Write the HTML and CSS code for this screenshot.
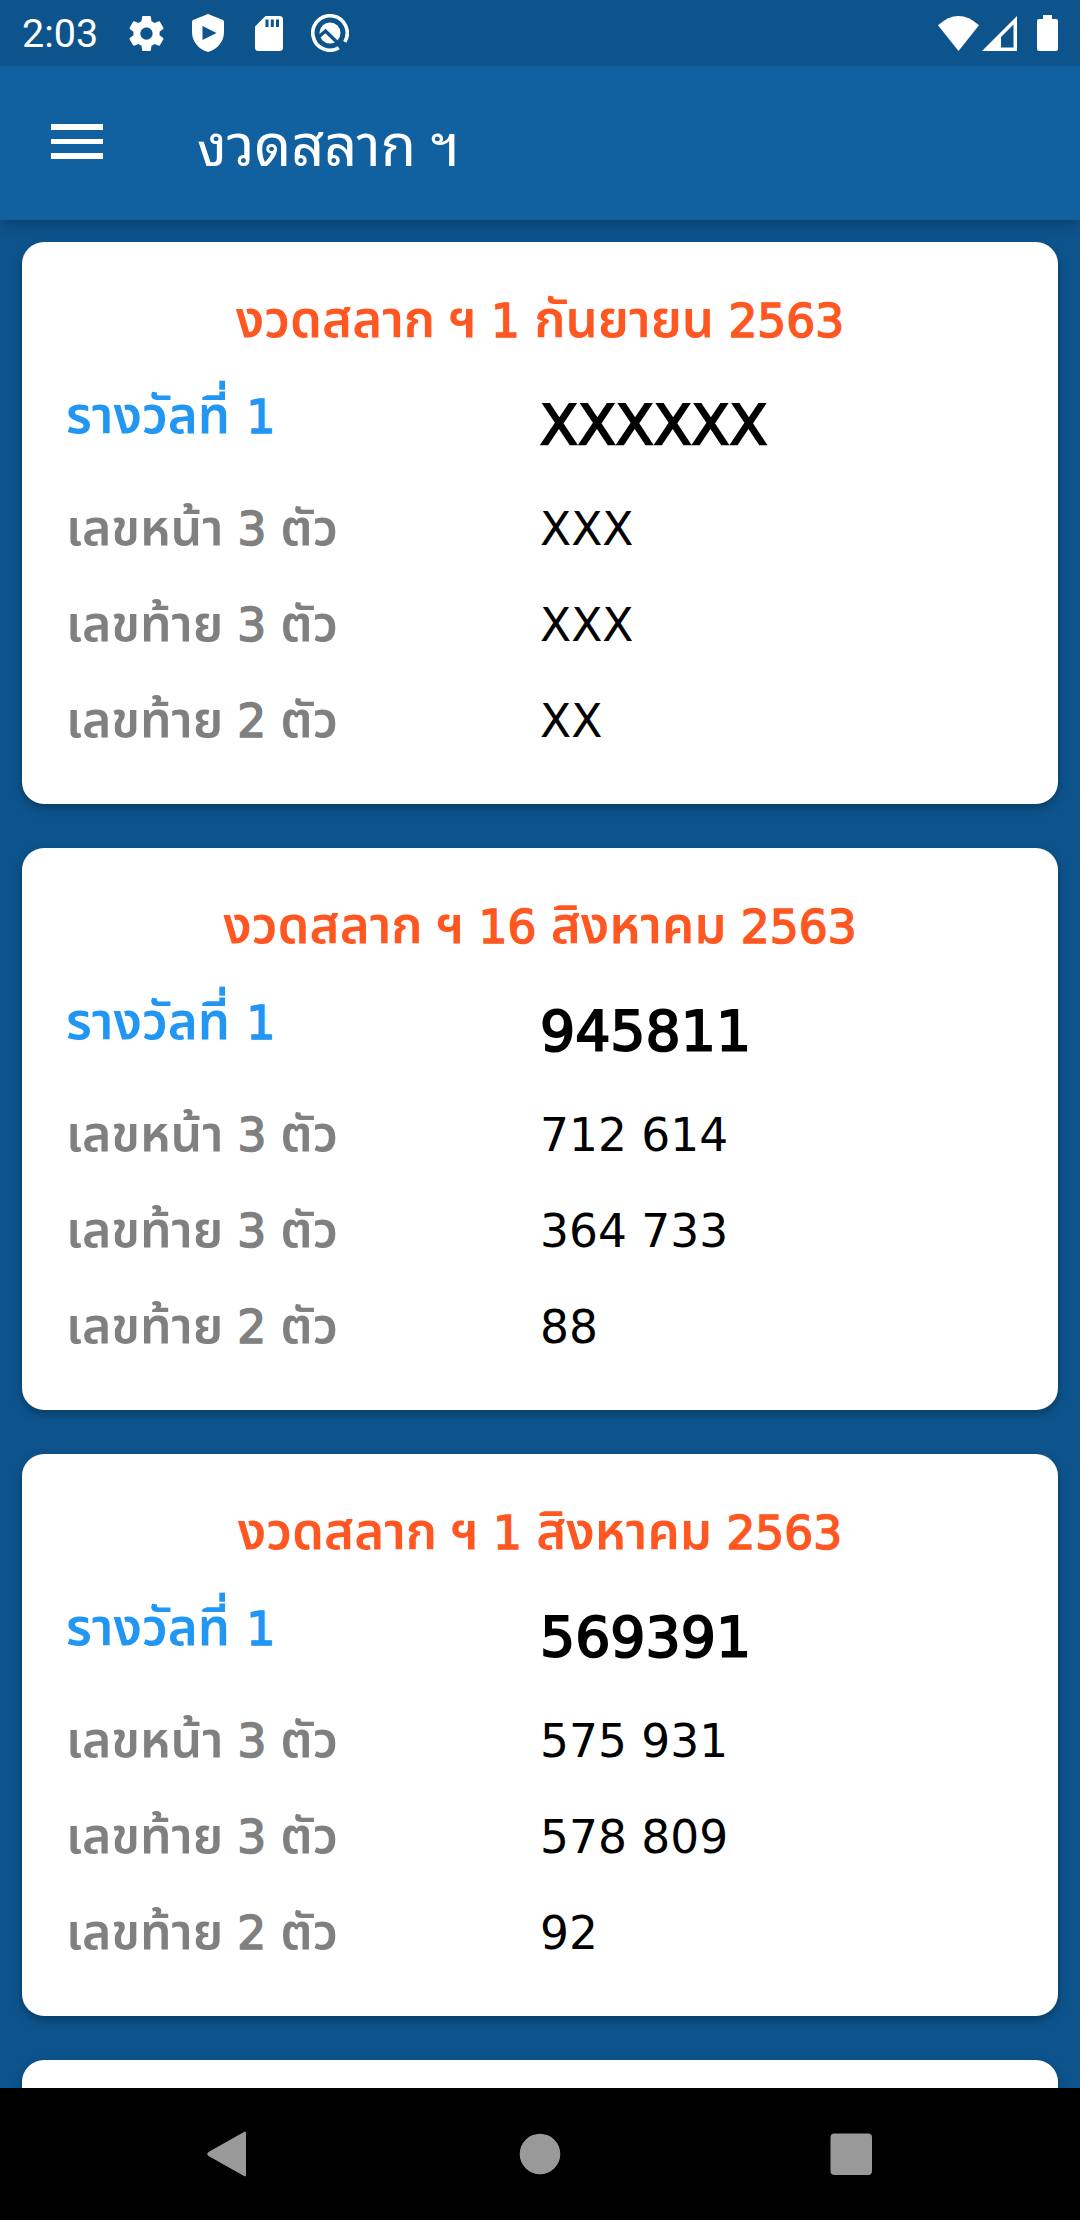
FILE: index.html
```
<!DOCTYPE html>
<html lang="th">
<head>
<meta charset="utf-8">
<title>งวดสลาก ฯ</title>
<link rel="stylesheet" href="styles.css">
</head>
<body>
<div class="screen">
  <header class="status">
    <span class="clock">2:03</span>
    <svg class="ic-gear" viewBox="2 2 20 20"><path fill="#fff" d="M19.43 12.98c.04-.32.07-.64.07-.98s-.03-.66-.07-.98l2.11-1.65c.19-.15.24-.42.12-.64l-2-3.46c-.12-.22-.39-.3-.61-.22l-2.49 1c-.52-.4-1.08-.73-1.69-.98l-.38-2.65C14.460 2.180 14.250 2 14 2h-4c-.25 0-.46.18-.49.42l-.38 2.65c-.61.25-1.17.59-1.69.98l-2.490-1c-.23-.09-.49 0-.61.22l-2 3.460c-.13.22-.07.49.12.64l2.110 1.650c-.04.32-.07.65-.07.98s.03.66.07.98l-2.110 1.650c-.19.15-.24.42-.12.64l2 3.460c.12.22.39.3.61.22l2.490-1c.52.4 1.080.73 1.690.98l.38 2.650c.03.24.24.42.49.42h4c.25 0 .46-.18.49-.42l.38-2.650c.61-.25 1.170-.59 1.690-.98l2.490 1c.23.09.49 0 .61-.22l2-3.460c.12-.22.07-.49-.12-.64l-2.110-1.650zM12 15.500c-1.930 0-3.500-1.570-3.500-3.500s1.570-3.500 3.500-3.500 3.500 1.570 3.500 3.500-1.570 3.500-3.500 3.500z"/></svg>
    <svg class="ic-shield" viewBox="0 0 32 38"><path fill="#fff" fill-rule="evenodd" d="M16 0L31 6Q32 6.500 32 8V18C32 28 25 35.500 16 38C7 35.500 0 28 0 18V8Q0 6.500 1 6ZM10.500 12V26L24.500 19Z"/></svg>
    <svg class="ic-sd" viewBox="0 0 28 35"><path fill="#fff" fill-rule="evenodd" d="M10.500 0H24.500Q28 0 28 3.500V31.500Q28 35 24.500 35H3.500Q0 35 0 31.500V10.500ZM10.500 3.500V11H13.500V3.500ZM15.800 3.500V11H18.800V3.500ZM21 3.500V11H24V3.500Z"/></svg>
    <svg class="ic-q" viewBox="0 0 38 38"><path fill="none" stroke="#fff" stroke-width="3.600" d="M27.800 33.800A17.200 17.200 0 1 1 33.800 27.800"/><circle cx="19" cy="19" r="10.500" fill="#fff"/><path fill="none" stroke="#0d548d" stroke-width="3.400" d="M7 23.500L14.500 17L33 35"/></svg>
    <svg class="ic-wifi" viewBox="0 0 41 35"><path fill="#fff" d="M0 9.300Q20.500-9.300 41 9.300L20.500 35Z"/></svg>
    <svg class="ic-signal" viewBox="0 0 35 35"><path fill="#fff" fill-rule="evenodd" d="M35 0V35H0ZM31.500 8.500L19 21V31.500H31.500Z"/></svg>
    <svg class="ic-battery" viewBox="0 0 21 36"><path fill="#fff" d="M6 0H15V4H19Q21 4 21 6V34Q21 36 19 36H2Q0 36 0 34V6Q0 4 2 4H6Z"/></svg>
  </header>
  <div class="appbar">
    <div class="menu"><i></i><i></i><i></i></div>
    <h1>งวดสลาก ฯ</h1>
  </div>
  <main class="list">
    <section class="card">
      <h2>งวดสลาก ฯ <b>1</b> กันยายน <b>2563</b></h2>
      <div class="row first"><span class="label">รางวัลที่ <b>1</b></span><span class="value">XXXXXX</span></div>
      <div class="row"><span class="label">เลขหน้า <b>3</b> ตัว</span><span class="value">XXX</span></div>
      <div class="row"><span class="label">เลขท้าย <b>3</b> ตัว</span><span class="value">XXX</span></div>
      <div class="row"><span class="label">เลขท้าย <b>2</b> ตัว</span><span class="value">XX</span></div>
    </section>
    <section class="card">
      <h2>งวดสลาก ฯ <b>16</b> สิงหาคม <b>2563</b></h2>
      <div class="row first"><span class="label">รางวัลที่ <b>1</b></span><span class="value">945811</span></div>
      <div class="row"><span class="label">เลขหน้า <b>3</b> ตัว</span><span class="value">712 614</span></div>
      <div class="row"><span class="label">เลขท้าย <b>3</b> ตัว</span><span class="value">364 733</span></div>
      <div class="row"><span class="label">เลขท้าย <b>2</b> ตัว</span><span class="value">88</span></div>
    </section>
    <section class="card">
      <h2>งวดสลาก ฯ <b>1</b> สิงหาคม <b>2563</b></h2>
      <div class="row first"><span class="label">รางวัลที่ <b>1</b></span><span class="value">569391</span></div>
      <div class="row"><span class="label">เลขหน้า <b>3</b> ตัว</span><span class="value">575 931</span></div>
      <div class="row"><span class="label">เลขท้าย <b>3</b> ตัว</span><span class="value">578 809</span></div>
      <div class="row"><span class="label">เลขท้าย <b>2</b> ตัว</span><span class="value">92</span></div>
    </section>
    <section class="card"></section>
  </main>
  <nav class="navbar">
    <svg viewBox="0 0 48 48"><path fill="#999" d="M41 3V45Q41 47 39 46L3.500 26Q1 24 3.500 22L39 2Q41 1 41 3Z"/></svg>
    <svg viewBox="0 0 48 48"><circle cx="24" cy="24" r="20.300" fill="#999"/></svg>
    <svg viewBox="0 0 48 48"><rect x="3.500" y="3.500" width="41.500" height="41.500" rx="4" fill="#999"/></svg>
  </nav>
</div>
</body>
</html>
```
FILE: styles.css
```
* { box-sizing: border-box; margin: 0; padding: 0; }
body { background: #0d548d; }
.screen {
  display: flex;
  flex-direction: column;
  width: 1080px;
  height: 2220px;
  overflow: hidden;
  font-family: "Noto Sans Thai", "Noto Sans", sans-serif;
}
.status {
  display: flex;
  align-items: center;
  flex: 0 0 66px;
  padding: 0 22px;
  background: #0d548d;
}
.status svg { flex: none; }
.clock {
  width: 107px;
  color: #fff;
  font: 400 39.500px/64px Roboto, sans-serif;
  padding-top: 2px;
}
.ic-gear { width: 35px; height: 35px; }
.ic-shield { width: 32px; height: 38px; margin-left: 28px; }
.ic-sd { width: 28px; height: 35px; margin-left: 31px; }
.ic-q { width: 38px; height: 38px; margin-left: 28px; }
.ic-wifi { width: 41px; height: 35px; margin-left: auto; }
.ic-signal { width: 35px; height: 35px; margin-left: 3px; }
.ic-battery { width: 21px; height: 36px; margin-left: 20px; }
.appbar {
  display: flex;
  align-items: flex-start;
  flex: 0 0 154px;
  padding-left: 51px;
  background: #1161a0;
  box-shadow: 0 2px 14px rgba(0, 0, 0, .3);
  z-index: 1;
  clip-path: inset(0 0 -30px 0);
}
.menu { display: flex; flex-direction: column; gap: 9px; width: 52px; margin: 58px 94px 0 0; }
.menu i { height: 5.500px; background: #fff; }
.appbar h1 {
  color: #fff;
  font: 400 57.500px/80px "Noto Sans", "Noto Sans Thai Looped", sans-serif;
  padding-top: 38px;
}
.list {
  display: flex;
  flex-direction: column;
  gap: 44px;
  flex: 1;
  min-height: 0;
  padding: 22px 22px 0;
  overflow: hidden;
}
.card {
  flex: 0 0 562px;
  padding: 0 44px;
  background: #fff;
  border-radius: 22px;
  box-shadow: 0 4px 10px rgba(0, 0, 0, .3);
}
.card h2 {
  padding-top: 38px;
  margin-bottom: 5px;
  text-align: center;
  color: #ff5722;
  font-size: 51px;
  font-weight: 600;
  line-height: 84px;
  word-spacing: 1px;
  white-space: nowrap;
}
.card b {
  font-family: "DejaVu Sans", sans-serif;
  font-size: 45.500px;
  font-weight: 400;
  line-height: 1;
  -webkit-text-stroke: 1.600px currentColor;
}
.row { display: flex; height: 96px; line-height: 96px; }
.row.first { height: 113px; }
.label { flex: 0 0 474px; color: #808080; font-size: 50px; font-weight: 600; word-spacing: 1px; white-space: nowrap; }
.first .label { color: #2196f3; font-size: 51px; line-height: 98px; word-spacing: 3px; }
.value { color: #000; font-family: "DejaVu Sans", sans-serif; font-size: 45.500px; }
.first .value { font-size: 55.300px; line-height: 112px; -webkit-text-stroke: 2px #000; }
.navbar {
  display: flex;
  align-items: center;
  justify-content: space-between;
  flex: 0 0 132px;
  padding: 0 205px;
  background: #000;
}
.navbar svg { width: 48px; height: 48px; }
```
